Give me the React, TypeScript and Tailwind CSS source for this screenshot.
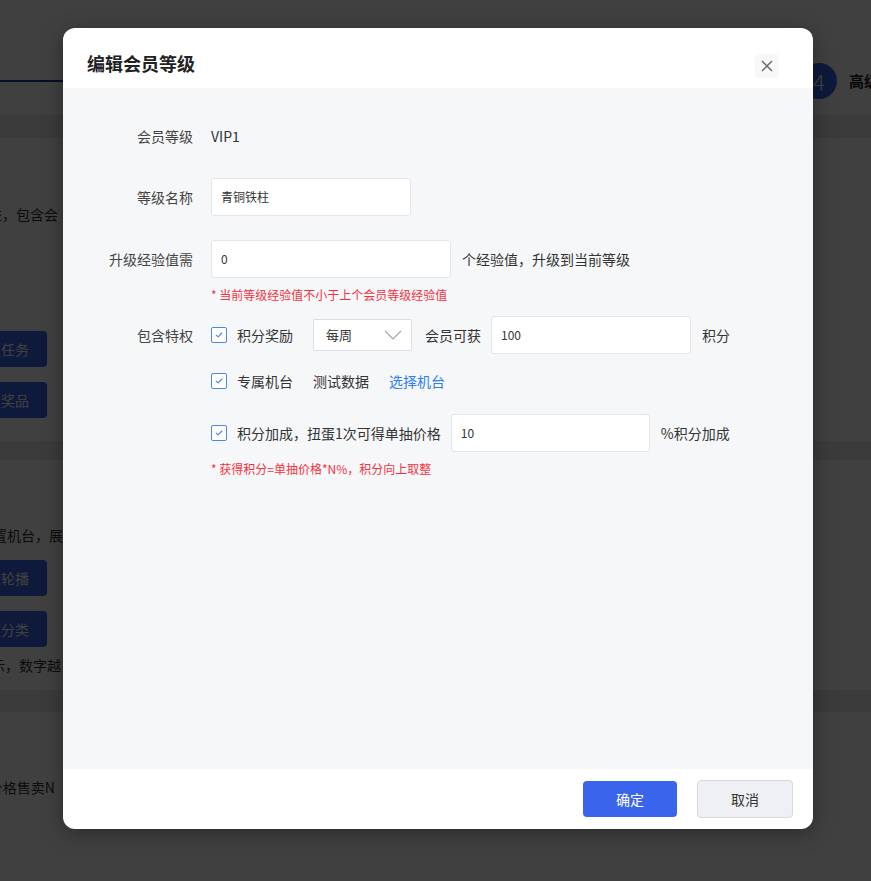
import React from "react";

const font = { fontFamily: '"Noto Sans CJK SC", "Noto Sans", sans-serif' };

function Check() {
  return (
    <span className="flex h-4 w-4 shrink-0 items-center justify-center rounded-[2px] border border-[#4a86f0] bg-white">
      <svg viewBox="0 0 16 16" className="h-[10px] w-[10px]">
        <path d="M3.5 8.2 6.6 11 12.5 4.8" fill="none" stroke="#4a86f0" strokeWidth="1.8" strokeLinecap="round" strokeLinejoin="round" />
      </svg>
    </span>
  );
}

function Field({ value, w }: { value: string; w: string }) {
  return (
    <div className={`flex h-[38px] shrink-0 items-center rounded-[3px] border border-[#e3e5e9] bg-white px-[9px] text-[12px] text-[#333] ${w}`}>
      {value}
    </div>
  );
}

function Label({ children }: { children: React.ReactNode }) {
  return <div className="w-[130px] shrink-0 text-right text-[14px] text-[#444]">{children}</div>;
}

// the page behind the dialog, only its edges show
function Background() {
  const btn = "flex h-9 items-center whitespace-nowrap rounded-[4px] bg-[#3b63ea] pl-4 pr-[18px] text-[14px] text-white";
  return (
    <div className="absolute inset-0 flex flex-col bg-white text-[#333]" style={font}>
      <div className="flex h-[82px] shrink-0 items-start">
        <div className="h-[82px] w-[63px] shrink-0 border-b-2 border-[#1f3f9e]" />
        <div className="w-[738px] shrink-0" />
        <div className="mt-[63px] flex shrink-0 items-center gap-3 whitespace-nowrap">
          <span className="flex h-9 w-9 items-center justify-center rounded-full bg-[#3b63ea] text-[22px] font-light text-white">4</span>
          <span className="text-[15px] font-bold text-[#222]">高级设置</span>
        </div>
      </div>
      <div className="h-[33px] shrink-0" />
      <div className="h-[23px] shrink-0 bg-[#e9eaec]" />
      <div className="flex w-[63px] flex-col overflow-hidden">
        <div className="mt-[66px] flex justify-end whitespace-nowrap pr-[5px] text-[14px] leading-5">会员等级权益，包含会</div>
        <div className="mt-[107px] flex justify-end pr-4"><div className={btn}>设置任务</div></div>
        <div className="mt-[15px] flex justify-end pr-4"><div className={btn}>设置奖品</div></div>
      </div>
      <div className="mt-[23px] h-[19px] shrink-0 bg-[#e9eaec]" />
      <div className="flex w-[63px] flex-col overflow-hidden">
        <div className="mt-[65px] flex justify-end whitespace-nowrap text-[14px] leading-5">可配置机台，展</div>
        <div className="mt-[15px] flex justify-end pr-4"><div className={btn}>设置轮播</div></div>
        <div className="mt-[15px] flex justify-end pr-4"><div className={btn}>设置分类</div></div>
        <div className="mt-[8px] flex justify-end whitespace-nowrap pr-[2px] text-[14px] leading-5">序号显示，数字越</div>
      </div>
      <div className="mt-[15px] h-[22px] shrink-0 bg-[#e9eaec]" />
      <div className="flex w-[63px] flex-col overflow-hidden">
        <div className="mt-[65px] flex justify-end whitespace-nowrap pr-[8px] text-[14px] leading-5">按单抽价格售卖N</div>
      </div>
    </div>
  );
}

export default function App() {
  return (
    <div className="relative h-[881px] w-[871px] overflow-hidden" style={font}>
      <Background />
      <div className="absolute inset-0 bg-black/75">
        <div className="ml-[63px] mt-[28px] flex h-[801px] w-[750px] flex-col overflow-hidden rounded-xl bg-white shadow-[0_4px_20px_rgba(0,0,0,0.35)]">
          <div className="flex h-[60px] shrink-0 items-center justify-between pl-6 pr-[34px] pt-[10px]">
            <h2 className="text-[18px] font-bold text-[#222]">编辑会员等级</h2>
            <button className="mt-[6px] flex h-6 w-6 items-center justify-center rounded bg-[#f8f8f8]">
              <svg viewBox="0 0 12 12" className="h-3 w-3">
                <path d="M1 1 11 11M11 1 1 11" stroke="#666" strokeWidth="1.4" />
              </svg>
            </button>
          </div>

          <div className="flex flex-1 flex-col bg-[#f6f7f9] pt-[30px]">
            <div className="flex h-9 items-center">
              <Label>会员等级</Label>
              <div className="ml-[18px] text-[14px] text-[#333]">VIP1</div>
            </div>

            <div className="mt-6 flex items-center">
              <Label>等级名称</Label>
              <div className="ml-[18px]"><Field value="青铜铁柱" w="w-[200px]" /></div>
            </div>

            <div className="mt-6 flex items-center">
              <Label>升级经验值需</Label>
              <div className="ml-[18px] flex items-center gap-[11px]">
                <Field value="0" w="w-[240px]" />
                <span className="text-[14px] text-[#333]">个经验值，升级到当前等级</span>
              </div>
            </div>
            <div className="ml-[148px] mt-[9px] text-[12px] leading-4 text-[#f5333f]">* 当前等级经验值不小于上个会员等级经验值</div>

            <div className="mt-[13px] flex items-center">
              <Label>包含特权</Label>
              <div className="ml-[18px] flex items-center text-[14px] text-[#333]">
                <Check />
                <span className="ml-[10px]">积分奖励</span>
                <div className="ml-5 flex h-8 w-[99px] items-center justify-between rounded-[2px] border border-[#dcdfe6] bg-white pl-[12px] pr-[9px] text-[13px]">
                  每周
                  <svg viewBox="0 0 18 10" className="h-[10px] w-[18px]">
                    <path d="M1 1 9 9 17 1" fill="none" stroke="#a0a4ab" strokeWidth="1.2" />
                  </svg>
                </div>
                <span className="ml-[13px]">会员可获</span>
                <div className="ml-[10px]"><Field value="100" w="w-[200px]" /></div>
                <span className="ml-[11px]">积分</span>
              </div>
            </div>

            <div className="ml-[148px] mt-[15px] flex h-6 items-center text-[14px] text-[#333]">
              <Check />
              <span className="ml-[10px]">专属机台</span>
              <span className="ml-5">测试数据</span>
              <span className="ml-5 text-[#2f7cf6]">选择机台</span>
            </div>

            <div className="ml-[148px] mt-[21px] flex items-center text-[14px] text-[#333]">
              <Check />
              <span className="ml-[10px]">积分加成，扭蛋1次可得单抽价格</span>
              <div className="ml-[10px]"><Field value="10" w="w-[199px]" /></div>
              <span className="ml-[11px]">%积分加成</span>
            </div>
            <div className="ml-[148px] mt-[9px] text-[12px] leading-4 text-[#f5333f]">* 获得积分=单抽价格*N%，积分向上取整</div>
          </div>

          <div className="flex h-[60px] shrink-0 items-center justify-end gap-5 pr-5">
            <button className="h-9 w-[94px] rounded-[4px] bg-[#3b64ec] text-[14px] text-white">确定</button>
            <button className="h-[38px] w-[96px] rounded-[4px] border border-[#d6d9df] bg-[#eff0f4] text-[14px] text-[#333]">取消</button>
          </div>
        </div>
      </div>
    </div>
  );
}
